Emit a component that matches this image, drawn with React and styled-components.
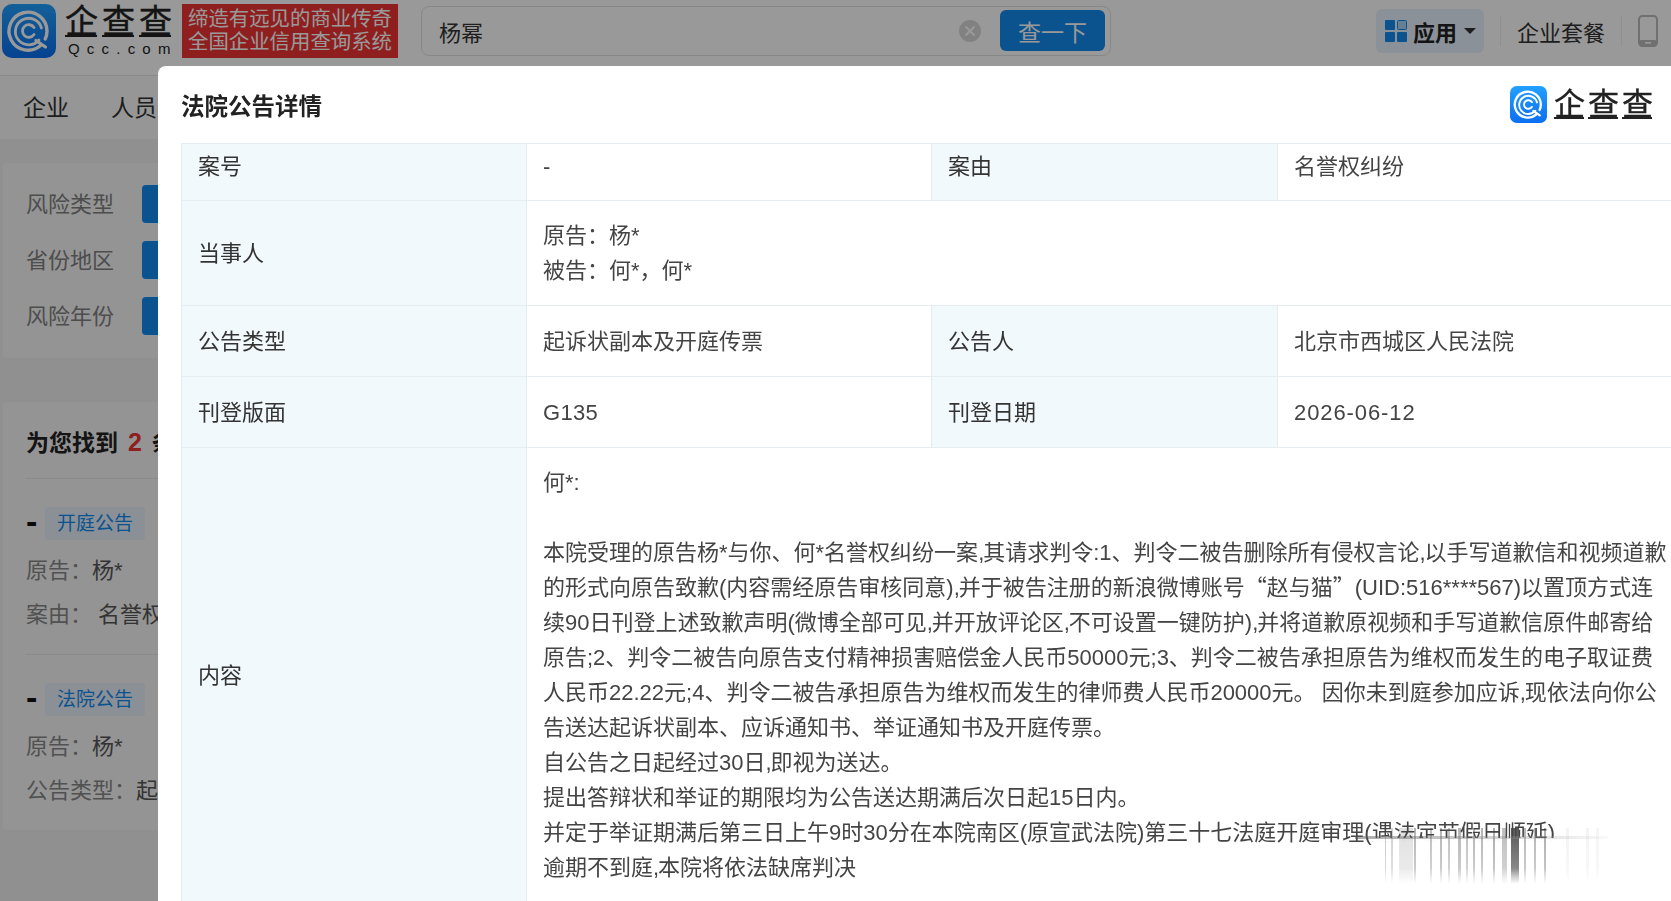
import React from 'react'
import styled, { createGlobalStyle } from 'styled-components'

const GlobalStyle = createGlobalStyle`
  html, body {
    margin: 0;
    height: 100%;
    overflow: hidden;
    background: #f0f0f0;
    color: #333;
    font-family: "Liberation Sans", "Noto Sans CJK SC", sans-serif;
    font-size: 22px;
  }
  * { box-sizing: border-box; }
`

const Page = styled.div`
  width: 1671px;
  height: 901px;
  overflow: hidden;
`

const TopBar = styled.header`
  display: flex;
  align-items: center;
  height: 76px;
  padding: 0 0 14px 2px;
  background: #fff;
  border-bottom: 1px solid #e4e4e4;
`

const LogoWords = styled.div`
  display: flex;
  flex-direction: column;
  margin-left: 9px;
  width: 117px;
`

const LogoName = styled.div`
  display: flex;
  gap: ${p => p.$gap}px;
  font-size: ${p => p.$size}px;
  line-height: 1;
  color: #222;
  -webkit-text-stroke: 0.4px #222;
`

const LogoChar = styled.span`
  position: relative;

  &::after {
    content: "";
    position: absolute;
    left: 0;
    right: 1px;
    bottom: 1px;
    height: 2px;
    background: #222;
  }
`

const LogoSub = styled.div`
  margin-top: 3px;
  padding-left: 3px;
  font-size: 15px;
  line-height: 16px;
  letter-spacing: 7.2px;
  color: #222;
`

const Slogan = styled.div`
  width: 216px;
  height: 54px;
  padding-top: 4px;
  background: #ee3434;
  color: #fff;
  font-size: 20.4px;
  line-height: 23px;
  text-align: center;
  white-space: nowrap;
`

const SearchBox = styled.div`
  display: flex;
  align-items: center;
  width: 690px;
  height: 50px;
  margin-left: 23px;
  padding: 0 5px 0 17px;
  border: 1px solid #e2e2e2;
  border-radius: 8px;
`

const SearchText = styled.span`
  flex: 1;
`

const SearchButton = styled.button`
  width: 105px;
  height: 41px;
  margin-left: 19px;
  border: 0;
  border-radius: 6px;
  background: #128bed;
  color: #fff;
  font: inherit;
  font-size: 23px;
`

const AppChip = styled.div`
  display: flex;
  align-items: center;
  gap: 6px;
  width: 108px;
  height: 44px;
  margin-left: 265px;
  padding-left: 9px;
  border-radius: 6px;
  background: #e8f2fd;
  font-weight: 700;
  color: #222;
`

const Caret = styled.i`
  border: 6px solid transparent;
  border-top: 6.5px solid #333;
  border-bottom: 0;
  margin-left: 1px;
`

const BarDivider = styled.span`
  width: 1px;
  height: 30px;
  margin: 0 16px;
  background: #eee;
`

const NavRow = styled.nav`
  display: flex;
  gap: 42px;
  align-items: center;
  height: 64px;
  padding: 0 0 3px 23px;
  background: #fafafa;
  border-bottom: 1px solid #eee;
  font-size: 23px;
`

const Panel = styled.section`
  margin: ${p => p.$top}px 0 0 3px;
  padding: 22px 0 0 23px;
  height: ${p => p.$height}px;
  background: #f7f7f7;
  border-radius: 4px;
`

const FilterRow = styled.div`
  display: flex;
  align-items: center;
  gap: 28px;
  height: 38px;
  margin-bottom: 18px;
  color: #808080;
`

const FilterLabel = styled.span`
  margin-top: -4px;
`

const FilterChip = styled.span`
  width: 90px;
  height: 38px;
  border-radius: 4px;
  background: #128bed;
`

const FoundTitle = styled.h2`
  margin: 0;
  padding: 2px 0 19px;
  font-size: 23px;
  line-height: 32px;
  font-weight: 700;
  color: #222;
  border-bottom: 1px solid #e6e6e6;

  b { color: #e33; font-size: 25px; margin: 0 3px; }
`

const ResultItem = styled.article`
  padding: 28px 0 17px;
  border-bottom: ${p => (p.$last ? 0 : '1px solid #e6e6e6')};
`

const TagLine = styled.div`
  display: flex;
  align-items: center;
  gap: 8px;
  margin-bottom: 9px;
`

const Dash = styled.span`
  width: 11px;
  height: 33px;
  font-size: 34px;
  line-height: 28px;
  font-weight: 700;
  color: #111;
`

const Tag = styled.span`
  padding: 0 12px;
  height: 33px;
  border-radius: 3px;
  background: #e6f1fb;
  color: #128bed;
  font-size: 19px;
  line-height: 33px;
`

const InfoLine = styled.div`
  line-height: 44px;
  white-space: nowrap;
  color: #888;

  span { color: #555; margin-left: ${p => p.$gap || 0}px; }
`

const Overlay = styled.div`
  position: fixed;
  inset: 0;
  background: rgba(0, 0, 0, 0.4);
`

const Modal = styled.div`
  position: fixed;
  top: 66px;
  left: 158px;
  right: 0;
  bottom: 0;
  overflow: hidden;
  background: #fff;
  border-radius: 8px 0 0 0;
  padding-left: 23px;
`

const ModalHead = styled.div`
  display: flex;
  align-items: center;
  justify-content: space-between;
  height: 77px;
  padding-right: 18px;
`

const ModalTitle = styled.h3`
  margin: 1px 0 0;
  font-size: 23.5px;
  font-weight: 700;
  color: #222;
`

const ModalLogo = styled.div`
  display: flex;
  align-items: center;
  gap: 7px;
  margin-top: -1px;
`

const DetailTable = styled.table`
  width: 1540px;
  table-layout: fixed;
  border-collapse: collapse;
  line-height: 35px;
`

const LabelCell = styled.td`
  padding: ${p => (p.$top ? '5px' : '0')} 15px 0 16px;
  background: #f2f9fc;
  border: 1px solid #e4edf2;
  color: #333;
  vertical-align: ${p => (p.$top ? 'top' : 'middle')};
`

const ValueCell = styled.td`
  padding: ${p => (p.$top ? '5px' : '0')} 15px 0 16px;
  border: 1px solid #e4edf2;
  color: #444;
  letter-spacing: ${p => p.$tracking || 0}px;
  vertical-align: ${p => (p.$top ? 'top' : 'middle')};
`

const Row = styled.tr`
  height: ${p => p.$h}px;
`

const ContentLine = styled.div`
  height: 35px;
  white-space: nowrap;
`

const ContentBody = styled.div`
  padding-top: 12px;
`

const Comma = styled.span`
  letter-spacing: -1.1px;
`

const WideQuote = styled.span`
  font-family: "Noto Sans CJK SC", sans-serif;
  line-height: 1;
`

// the blurred watermark that sits over the last lines of the notice
const streaks = [
  [12, 1, 0.3], [18, 2, 0.25], [26, 14, 0.16], [41, 2, 0.4], [57, 2, 0.35], [67, 2, 0.4], [75, 2, 0.35],
  [85, 3, 0.4], [93, 2, 0.35], [100, 2, 0.4], [108, 2, 0.4], [120, 2, 0.45], [129, 5, 0.35], [138, 8, 0.9],
  [151, 2, 0.4], [161, 2, 0.4], [171, 2, 0.45], [193, 3, 0.06], [213, 3, 0.06], [223, 3, 0.05],
]

const streakBackground = streaks
  .map(([x, w, a]) => `linear-gradient(rgba(70,70,70,${a}), rgba(70,70,70,${a * 0.6})) ${x}px 0 / ${w}px 100% no-repeat`)
  .join(', ')

const Watermark = styled.div`
  position: fixed;
  left: 1373px;
  top: 838px;
  width: 235px;
  height: 46px;
  background: linear-gradient(90deg, rgba(255,255,255,.98) 0 76%, rgba(255,255,255,.4) 100%);
  pointer-events: none;
`

const WatermarkStreaks = styled.div`
  position: absolute;
  inset: -10px 0 0 0;
  filter: blur(0.7px);
  -webkit-mask-image: linear-gradient(#000 72%, transparent);
  mask-image: linear-gradient(#000 72%, transparent);
`

const WatermarkRule = styled.div`
  position: absolute;
  left: -18px;
  right: 0;
  top: -2px;
  height: 3px;
  filter: blur(0.7px);
  background: linear-gradient(90deg, rgba(90,90,90,.5), rgba(150,150,150,.3) 70%, rgba(200,200,200,.1));
`

function LogoMark({ size }) {
  return (
    <svg width={size} height={size} viewBox="0 0 54 54" aria-hidden="true">
      <defs>
        <linearGradient id="qccBlue" x1="0" y1="0" x2="0" y2="1">
          <stop offset="0" stopColor="#22a0ff" />
          <stop offset="1" stopColor="#0b6ff0" />
        </linearGradient>
      </defs>
      <rect width="54" height="54" rx="10" fill="url(#qccBlue)" />
      <g fill="none" stroke="#fff" strokeLinecap="round">
        <path d="M38.5 41.5A19 19 0 1 1 45 27c0 3-.6 5.5-1.8 8" strokeWidth="3.4" />
        <path d="M37 36A13.3 13.3 0 1 1 39.5 24" strokeWidth="2.8" />
        <path d="M32 23.5a6.3 6.3 0 1 0 0 7" strokeWidth="2.8" />
        <path d="M34 36.5l9.5 6.5" strokeWidth="3.2" />
      </g>
    </svg>
  )
}

function BrandName({ size, gap }) {
  return (
    <LogoName $size={size} $gap={gap}>
      <LogoChar>企</LogoChar>
      <LogoChar>查</LogoChar>
      <LogoChar>查</LogoChar>
    </LogoName>
  )
}

function AppsIcon() {
  return (
    <svg width="22" height="22" viewBox="0 0 22 22" aria-hidden="true">
      <rect width="10" height="10" rx="1" fill="#128bed" />
      <rect x="12.5" y=".5" width="9" height="9" rx="1" fill="#a8d4f7" stroke="#128bed" />
      <rect y="12" width="10" height="10" rx="1" fill="#128bed" />
      <rect x="12" y="12" width="10" height="10" rx="1" fill="#128bed" />
    </svg>
  )
}

function PhoneIcon() {
  return (
    <svg width="20" height="32" viewBox="0 0 20 32" aria-hidden="true">
      <rect x="1" y="1" width="18" height="30" rx="3.5" fill="none" stroke="#bbb" strokeWidth="2" />
      <rect x="1" y="25" width="18" height="6" rx="2" fill="#bbb" />
      <rect x="7" y="27" width="6" height="1.6" fill="#fff" />
    </svg>
  )
}

function ClearIcon() {
  return (
    <svg width="22" height="22" viewBox="0 0 22 22" aria-hidden="true">
      <circle cx="11" cy="11" r="11" fill="#d8d8d8" />
      <path d="M7 7l8 8M15 7l-8 8" stroke="#fff" strokeWidth="2" strokeLinecap="round" />
    </svg>
  )
}

const notice = [
  '何*:',
  '',
  '本院受理的原告杨*与你、何*名誉权纠纷一案,其请求判令:1、判令二被告删除所有侵权言论,以手写道歉信和视频道歉',
  '的形式向原告致歉(内容需经原告审核同意),并于被告注册的新浪微博账号“赵与猫”(UID:516****567)以置顶方式连',
  '续90日刊登上述致歉声明(微博全部可见,并开放评论区,不可设置一键防护),并将道歉原视频和手写道歉信原件邮寄给',
  '原告;2、判令二被告向原告支付精神损害赔偿金人民币50000元;3、判令二被告承担原告为维权而发生的电子取证费',
  '人民币22.22元;4、判令二被告承担原告为维权而发生的律师费人民币20000元。 因你未到庭参加应诉,现依法向你公',
  '告送达起诉状副本、应诉通知书、举证通知书及开庭传票。',
  '自公告之日起经过30日,即视为送达。',
  '提出答辩状和举证的期限均为公告送达期满后次日起15日内。',
  '并定于举证期满后第三日上午9时30分在本院南区(原宣武法院)第三十七法庭开庭审理(遇法定节假日顺延)',
  '逾期不到庭,本院将依法缺席判决',
]

// commas run a little tight in this notice and its curly quotes are full width
function renderLine(line) {
  return line.split(/(,|“|”)/).map((part, i) => {
    if (part === ',') return <Comma key={i}>,</Comma>
    if (part === '“' || part === '”') return <WideQuote key={i}>{part}</WideQuote>
    return part
  })
}

export default function App() {
  return (
    <Page>
      <GlobalStyle />
      <TopBar>
        <LogoMark size={54} />
        <LogoWords>
          <BrandName size={33} gap={4} />
          <LogoSub>Qcc.com</LogoSub>
        </LogoWords>
        <Slogan>缔造有远见的商业传奇<br />全国企业信用查询系统</Slogan>
        <SearchBox>
          <SearchText>杨幂</SearchText>
          <ClearIcon />
          <SearchButton>查一下</SearchButton>
        </SearchBox>
        <AppChip>
          <AppsIcon />
          应用
          <Caret />
        </AppChip>
        <BarDivider />
        企业套餐
        <BarDivider />
        <PhoneIcon />
      </TopBar>

      <NavRow>
        <span>企业</span>
        <span>人员</span>
      </NavRow>

      <Panel $top={23} $height={195}>
        <FilterRow><FilterLabel>风险类型</FilterLabel><FilterChip /></FilterRow>
        <FilterRow><FilterLabel>省份地区</FilterLabel><FilterChip /></FilterRow>
        <FilterRow><FilterLabel>风险年份</FilterLabel><FilterChip /></FilterRow>
      </Panel>

      <Panel $top={44} $height={428}>
        <FoundTitle>为您找到<b> 2 </b>条</FoundTitle>
        <ResultItem>
          <TagLine><Dash>-</Dash><Tag>开庭公告</Tag></TagLine>
          <InfoLine>原告：<span>杨*</span></InfoLine>
          <InfoLine $gap={6}>案由：<span>名誉权纠纷</span></InfoLine>
        </ResultItem>
        <ResultItem $last>
          <TagLine><Dash>-</Dash><Tag>法院公告</Tag></TagLine>
          <InfoLine>原告：<span>杨*</span></InfoLine>
          <InfoLine>公告类型：<span>起诉状副本</span></InfoLine>
        </ResultItem>
      </Panel>

      <Overlay />

      <Modal>
        <ModalHead>
          <ModalTitle>法院公告详情</ModalTitle>
          <ModalLogo>
            <LogoMark size={37} />
            <BrandName size={31} gap={3} />
          </ModalLogo>
        </ModalHead>
        <DetailTable>
          <colgroup>
            <col style={{ width: 345 }} />
            <col style={{ width: 405 }} />
            <col style={{ width: 346 }} />
            <col />
          </colgroup>
          <tbody>
            <Row $h={57}>
              <LabelCell $top>案号</LabelCell>
              <ValueCell $top>-</ValueCell>
              <LabelCell $top>案由</LabelCell>
              <ValueCell $top>名誉权纠纷</ValueCell>
            </Row>
            <Row $h={105}>
              <LabelCell>当事人</LabelCell>
              <ValueCell colSpan={3}>原告：杨*<br />被告：何*，何*</ValueCell>
            </Row>
            <Row $h={71}>
              <LabelCell>公告类型</LabelCell>
              <ValueCell>起诉状副本及开庭传票</ValueCell>
              <LabelCell>公告人</LabelCell>
              <ValueCell>北京市西城区人民法院</ValueCell>
            </Row>
            <Row $h={71}>
              <LabelCell>刊登版面</LabelCell>
              <ValueCell $tracking={0.3}>G135</ValueCell>
              <LabelCell>刊登日期</LabelCell>
              <ValueCell $tracking={0.9}>2026-06-12</ValueCell>
            </Row>
            <Row $h={456}>
              <LabelCell>内容</LabelCell>
              <ValueCell colSpan={3} $top>
                <ContentBody>
                  {notice.map((line, i) => <ContentLine key={i}>{renderLine(line)}</ContentLine>)}
                </ContentBody>
              </ValueCell>
            </Row>
          </tbody>
        </DetailTable>
      </Modal>

      <Watermark>
        <WatermarkStreaks style={{ background: streakBackground }} />
        <WatermarkRule />
      </Watermark>
    </Page>
  )
}
